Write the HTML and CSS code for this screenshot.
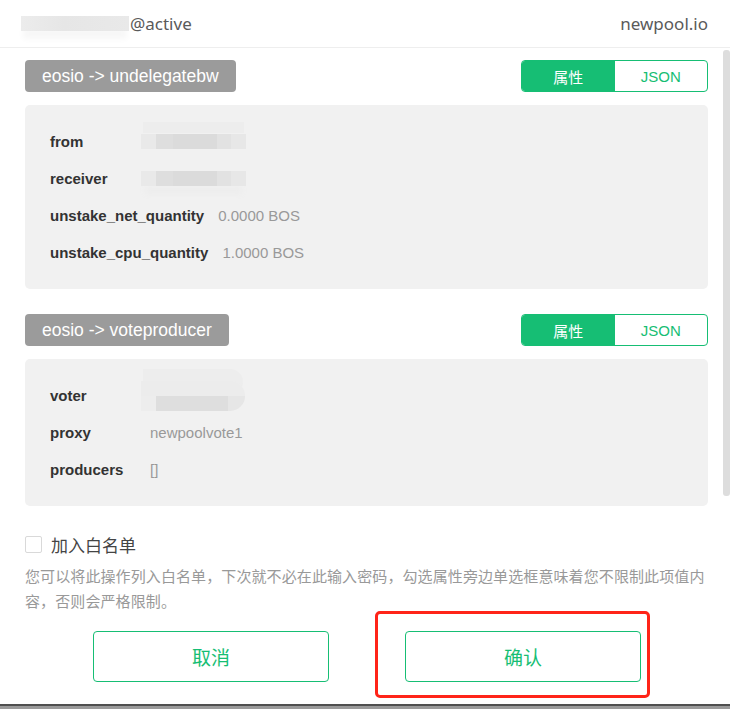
FILE: index.html
```html
<!DOCTYPE html>
<html lang="zh">
<head>
  <meta charset="UTF-8" />
  <meta name="viewport" content="width=device-width, initial-scale=1.0" />
  <title>newpool.io</title>
  <link rel="stylesheet" href="styles.css">
</head>
<body>
  <div class="page">
    <div class="header">
      <div class="account"><span class="blur blur-name"></span>@active</div>
      <div class="site">newpool.io</div>
    </div>

    <div class="content">
      <div class="action">
        <div class="action-head">
          <div class="tag">eosio -&gt; undelegatebw</div>
          <div class="toggle">
            <span class="on">属性</span>
            <span>JSON</span>
          </div>
        </div>
        <div class="panel">
          <div class="row"><span class="key">from</span><span class="blur blur-val"></span></div>
          <div class="row"><span class="key">receiver</span><span class="blur blur-val flat"></span></div>
          <div class="row"><span class="key">unstake_net_quantity</span><span class="val">0.0000 BOS</span></div>
          <div class="row"><span class="key">unstake_cpu_quantity</span><span class="val">1.0000 BOS</span></div>
        </div>
      </div>

      <div class="action">
        <div class="action-head">
          <div class="tag">eosio -&gt; voteproducer</div>
          <div class="toggle">
            <span class="on">属性</span>
            <span>JSON</span>
          </div>
        </div>
        <div class="panel">
          <div class="row"><span class="key">voter</span><span class="blur blur-val round"></span></div>
          <div class="row"><span class="key">proxy</span><span class="val">newpoolvote1</span></div>
          <div class="row"><span class="key">producers</span><span class="val">[]</span></div>
        </div>
      </div>

      <label class="whitelist"><span class="box"></span>加入白名单</label>
      <p class="note">您可以将此操作列入白名单，下次就不必在此输入密码，勾选属性旁边单选框意味着您不限制此项值内容，否则会严格限制。</p>

      <div class="buttons">
        <button class="btn">取消</button>
        <button class="btn confirm">确认<span class="mark"></span></button>
      </div>
    </div>

    <div class="scrollbar"></div>
    <div class="bottom-edge"></div>
  </div>
</body>
</html>
```

FILE: styles.css
```css
body { margin: 0; background: #fff; font-family: "Liberation Sans", Arial, "Noto Sans CJK SC", sans-serif; }
.page { position: relative; width: 730px; height: 709px; overflow: hidden; }

.header { height: 47px; border-bottom: 1px solid #eeeeee; display: flex; align-items: center; justify-content: space-between; padding: 0 22px 0 21px; font-family: "Noto Sans", "Noto Sans CJK SC", sans-serif; font-size: 17px; color: #5a5a5a; }
.account { display: flex; align-items: center; }
.blur-name { display: inline-block; width: 108px; height: 15px; margin-right: 1px; background: linear-gradient(90deg, #ececec 0%, #e6e6e6 40%, #e9e9e9 100%); box-shadow: 0 10px 6px -2px #f7f7f7; }

.content { padding: 0 22px 0 25px; }
.action-head { display: flex; justify-content: space-between; margin-top: 12px; }
.action + .action .action-head { margin-top: 25px; }
.tag { height: 32px; line-height: 32px; padding: 0 17px; background: #9b9b9b; color: #fff; font-size: 17.5px; border-radius: 4px; }
.toggle { display: flex; width: 187px; height: 32px; box-sizing: border-box; border: 1px solid #16be74; border-radius: 4px; overflow: hidden; }
.toggle span { flex: 1; display: flex; align-items: center; justify-content: center; font-size: 15px; color: #16be74; font-family: "Liberation Sans", "Noto Sans CJK SC", sans-serif; }
.toggle .on { background: #16be74; color: #fff; }

.panel { margin-top: 13px; background: #f1f1f1; border-radius: 5px; padding: 18px 25px; }
.row { height: 37px; display: flex; align-items: center; font-size: 15px; }
.key { min-width: 86px; padding-right: 14px; font-weight: bold; color: #333; }
.val { color: #999; }
.blur-val { display: inline-block; width: 105px; height: 15px; margin-left: -9px; background: linear-gradient(90deg, #e9e9e9 0 14%, #dedede 14% 30%, #dbdbdb 30% 72%, #e2e2e2 72% 86%, #e7e7e7 86%); box-shadow: 0 -14px 0 -2px #ededed; }
.blur-val.flat { box-shadow: 0 12px 6px -4px #ececec; }
.blur-val.round { width: 104px; height: 30px; border-radius: 0 15px 15px 0; background: linear-gradient(180deg, #ececec 0 50%, transparent 50%), linear-gradient(90deg, #ededed 0 14%, #dedede 14% 84%, #e6e6e6 84%); }

.whitelist { display: flex; align-items: center; gap: 9px; margin-top: 26px; height: 24px; font-family: "Noto Sans CJK SC", sans-serif; font-size: 17px; color: #444; }
.box { width: 15px; height: 15px; border: 1px solid #d9d9d9; border-radius: 2px; background: #fff; }
.note { margin: 7px 0 0; font-family: "Noto Sans CJK SC", sans-serif; font-size: 15px; letter-spacing: 0.1px; line-height: 25px; color: #999; }

.buttons { display: flex; justify-content: center; gap: 76px; margin-top: 18px; padding-left: 1px; }
.btn { position: relative; width: 236px; height: 51px; background: #fff; border: 1px solid #16be74; border-radius: 4px; color: #16be74; font-family: "Noto Sans CJK SC", sans-serif; font-size: 19px; cursor: pointer; }
.mark { position: absolute; left: -31px; top: -21px; width: 275px; height: 87px; box-sizing: border-box; border: 3px solid #ff2418; border-radius: 5px; }

.scrollbar { position: absolute; left: 723px; top: 50px; width: 7px; height: 446px; background: #dddddd; border-radius: 3px; }
.bottom-edge { position: absolute; left: 0; right: 0; bottom: 0; height: 3px; border-top: 2px solid #4f4f4f; background: #9a9a9a; }
```
